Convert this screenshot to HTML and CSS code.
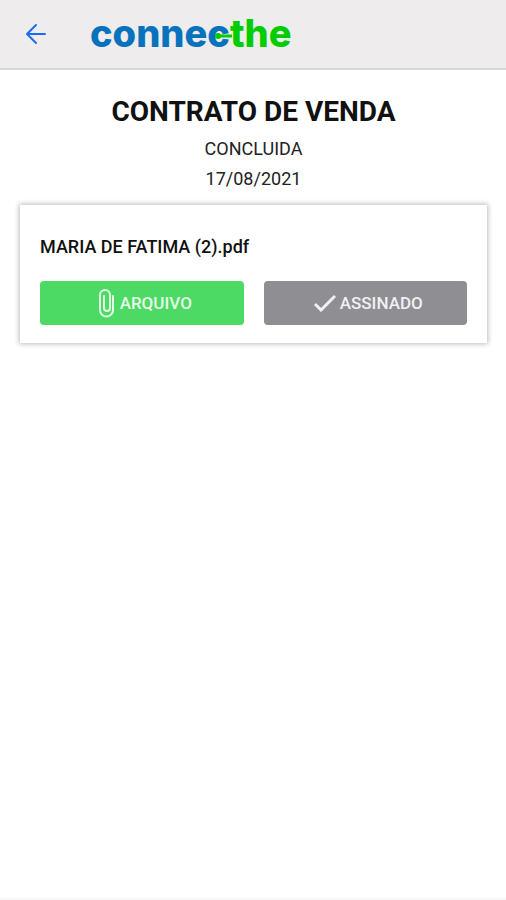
FILE: index.html
```html
<!DOCTYPE html>
<html lang="pt-BR">
<head>
<meta charset="utf-8">
<meta name="viewport" content="width=device-width, initial-scale=1">
<title>Contrato de venda</title>
<link rel="stylesheet" href="styles.css">
</head>
<body>
<header class="topbar">
  <button class="back" type="button" aria-label="Voltar">
    <svg class="back-icon" viewBox="0 0 22 22" aria-hidden="true"><path d="M20 11H2M11 2L2 11l9 9"/></svg>
  </button>
  <div class="logo"><span class="logo-blue">connec</span><span class="logo-green">the</span><svg class="logo-link" viewBox="0 0 20 8" aria-hidden="true"><circle cx="4" cy="4" r="3"/><path d="M4 4h14"/></svg></div>
</header>
<main class="content">
  <h1 class="title">CONTRATO DE VENDA</h1>
  <p class="meta">CONCLUIDA</p>
  <p class="meta">17/08/2021</p>
  <section class="card">
    <p class="file">MARIA DE FATIMA (2).pdf</p>
    <div class="actions">
      <button class="action action-file" type="button">
        <svg class="clip" viewBox="0 0 16 30" aria-hidden="true"><path d="M15 8v14a6.500 6.500 0 0 1-13 0V7a5 5 0 0 1 10 0v13a3 3 0 0 1-6 0V8"/></svg>
        <span>ARQUIVO</span>
      </button>
      <button class="action action-signed" type="button">
        <svg class="check" viewBox="0 0 22 18" aria-hidden="true"><path d="M1 10l6 6L21 2"/></svg>
        <span>ASSINADO</span>
      </button>
    </div>
  </section>
</main>
<footer class="footer"></footer>
</body>
</html>
```
FILE: styles.css
```css
* { box-sizing: border-box; }
body {
  margin: 0;
  min-height: 100vh;
  display: flex;
  flex-direction: column;
  background: #fff;
  color: #111;
  font-family: Roboto, "Liberation Sans", sans-serif;
}
button { margin: 0; border: 0; font: inherit; cursor: pointer; }
.topbar {
  display: flex;
  align-items: center;
  gap: 36px;
  height: 70px;
  padding: 0 18px;
  background: #eeecec;
  border-bottom: 2px solid #d8d7d7;
}
.back { display: flex; padding: 7px; background: none; }
.back-icon { width: 22px; height: 22px; fill: none; stroke: #1c6bf5; stroke-width: 2; stroke-linecap: round; stroke-linejoin: round; }
.logo {
  position: relative;
  padding-bottom: 2px;
  font-family: Inter, sans-serif;
  font-weight: 800;
  font-size: 38px;
  line-height: 46px;
}
.logo-blue { color: #0872bd; }
.logo-green { color: #0c0; }
.logo-link { position: absolute; left: 124px; top: 22px; width: 20px; height: 8px; fill: #0c0; }
.logo-link path { stroke: #0c0; stroke-width: 3; }
.content { flex: 1; padding: 24px 19px 24px 20px; text-align: center; }
.title { margin: 0 0 4px; font-size: 28px; line-height: 36px; font-weight: 700; }
.meta { margin: 0; font-size: 18px; line-height: 30px; color: #222; }
.card {
  margin-top: 11px;
  padding: 28px 20px 18px;
  background: #fff;
  box-shadow: 0 0 5px 1px #bbb;
  text-align: left;
}
.file { margin: 0 0 20px; font-size: 18px; line-height: 28px; font-weight: 500; }
.actions { display: grid; grid-template-columns: 1fr 1fr; gap: 20px; }
.action {
  display: flex;
  align-items: center;
  justify-content: center;
  gap: 6px;
  height: 44px;
  padding: 0 0 0 6px;
  border-radius: 4px;
  color: #f1f1f3;
  font-size: 17px;
  font-weight: 500;
}
.action-file { background: #4cd964; color: #e4fbe6; }
.action-signed { gap: 4px; background: #8e8e93; }
.clip { width: 16px; height: 30px; fill: none; stroke: currentColor; stroke-width: 2; stroke-linecap: round; }
.check { width: 22px; height: 18px; fill: none; stroke: currentColor; stroke-width: 3; }
.footer { height: 2px; background: #f7f7f7; }
```
